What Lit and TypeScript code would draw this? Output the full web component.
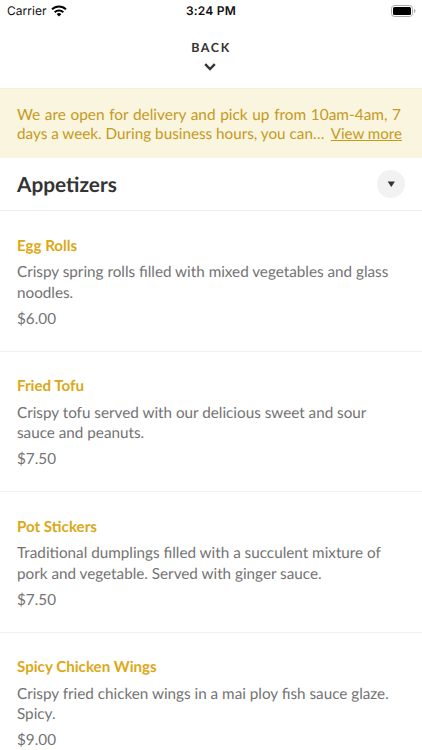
import { LitElement, html, css } from "lit";
import { customElement } from "lit/decorators.js";

interface Dish { name: string; lines: string[]; price: string }

const DISHES: Dish[] = [
  { name: "Egg Rolls", lines: ["Crispy spring rolls filled with mixed vegetables and glass", "noodles."], price: "$6.00" },
  { name: "Fried Tofu", lines: ["Crispy tofu served with our delicious sweet and sour", "sauce and peanuts."], price: "$7.50" },
  { name: "Pot Stickers", lines: ["Traditional dumplings filled with a succulent mixture of", "pork and vegetable. Served with ginger sauce."], price: "$7.50" },
  { name: "Spicy Chicken Wings", lines: ["Crispy fried chicken wings in a mai ploy fish sauce glaze.", "Spicy."], price: "$9.00" },
];

@customElement("app-root")
export class AppRoot extends LitElement {
  static styles = css`
    :host { display: block; height: 750px; overflow: hidden; background: #fff; font-family: Lato, sans-serif; color: #737373; text-rendering: geometricPrecision; }
    * { box-sizing: border-box; }
    .status { height: 22px; display: grid; grid-template-columns: 1fr auto 1fr; align-items: center; padding: 0 6px 0 7px; font: 12px/22px Inter, sans-serif; color: #111; }
    .carrier { display: flex; align-items: center; gap: 4px; letter-spacing: 0.05px; }
    .time { font-weight: 600; letter-spacing: 0.2px; margin-right: 1px; }
    .battery { justify-self: end; display: block; }
    .back { height: 67px; border-bottom: 1px solid #f1eee3; display: flex; flex-direction: column; align-items: center; padding-top: 17px; color: #333; }
    .back-label { font-size: 12.5px; line-height: 17px; font-weight: 700; letter-spacing: 1.6px; }
    .back svg { margin-top: 7px; margin-right: 2px; }
    .notice { height: 69px; background: #faf5df; color: #c59a1c; padding: 17px 20px 0 17px; font-size: 15.25px; line-height: 18.5px; white-space: nowrap; }
    .filled { text-align: justify; text-align-last: justify; font-size: 15.4px; margin-right: 1px; white-space: normal; }
    .row { display: flex; justify-content: space-between; }
    .more { text-decoration: underline; font-size: 15.1px; }
    .section { height: 53px; border-bottom: 1px solid #ececec; padding: 0 17px; display: flex; justify-content: space-between; align-items: center; }
    h1 { margin: 2px 0 0; font-size: 20.8px; line-height: 28px; color: #333; }
    .toggle { width: 28px; height: 28px; border-radius: 50%; background: #f2f2f2; display: grid; place-items: center; }
    .dish { height: 140.6px; border-bottom: 1px solid #f0f0f0; padding: 24.5px 17px 0; font-size: 15.25px; line-height: 20.5px; white-space: nowrap; }
    h2 { margin: 0 0 6px; font-size: 15.15px; line-height: 20.5px; color: #dba816; }
    .price { margin-top: 5.5px; }
  `;

  render() {
    return html`
      <div class="status">
        <span class="carrier">Carrier
          <svg width="16" height="12" viewBox="0 0 16 12"><path d="M8 11.500 5.700 9.200a3.300 3.300 0 0 1 4.600 0ZM3 6.500a7.100 7.100 0 0 1 10 0L11.600 8a5.100 5.100 0 0 0-7.200 0ZM.3 3.700a10.900 10.900 0 0 1 15.400 0l-1.400 1.400a8.900 8.900 0 0 0-12.600 0Z"/></svg>
        </span>
        <span class="time">3:24 PM</span>
        <svg class="battery" width="25" height="12" viewBox="0 0 25 12"><rect x=".5" y=".5" width="21" height="11" rx="3" fill="none" stroke="#aaa"/><rect x="2" y="2" width="18" height="8" rx="1.5"/><path d="M23 4v4c2-.8 2-3.200 0-4Z" fill="#aaa"/></svg>
      </div>
      <div class="back"><span class="back-label">BACK</span>
        <svg width="12" height="8" viewBox="0 0 12 8"><path d="m1.200 1.200 4.800 4.800 4.800-4.800" fill="none" stroke="#333" stroke-width="2.400"/></svg>
      </div>
      <div class="notice"><div class="filled">We are open for delivery and pick up from 10am-4am, 7</div>
        <div class="row"><span>days a week. During business hours, you can…</span><span class="more">View more</span></div></div>
      <div class="section"><h1>Appetizers</h1><span class="toggle"><svg width="8" height="6" viewBox="0 0 8 6"><path d="M.700.500h7.200L4.300 6Z" fill="#333"/></svg></span></div>
      ${DISHES.map((d) => html`<div class="dish"><h2>${d.name}</h2>${d.lines.map((l) => html`<div>${l}</div>`)}<div class="price">${d.price}</div></div>`)}
    `;
  }
}
